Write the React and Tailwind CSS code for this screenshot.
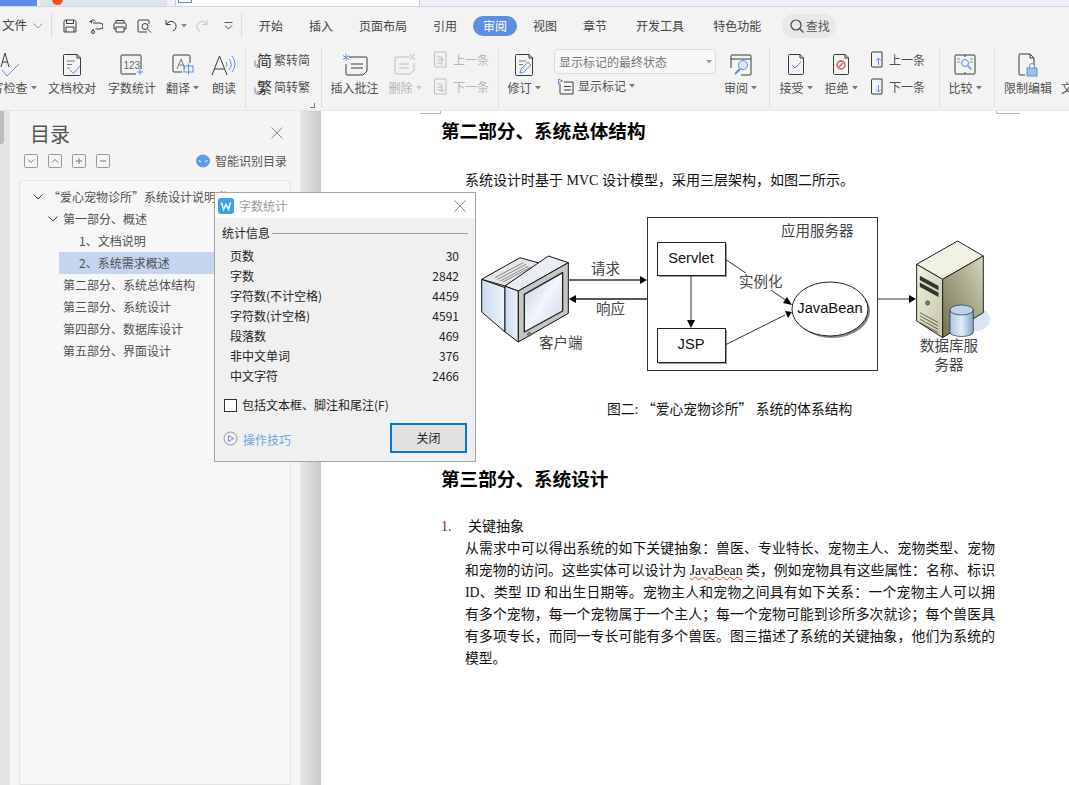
import React from "react";

const K = "#3a3a3a";
const B = "#5b8fe0";
const D = "#bdbdbd";

function Ic({ w = 24, h = 24, children, className = "" }) {
  return (
    <svg width={w} height={h} viewBox={`0 0 ${w} ${h}`} fill="none" stroke={K} strokeWidth="1" className={`shrink-0 ${className}`}>
      {children}
    </svg>
  );
}

const Caret = ({ c = "#777" }) => (
  <svg width="6" height="4" viewBox="0 0 6 4" className="ml-[3px] shrink-0"><path d="M0 0h6L3 3.5z" fill={c} /></svg>
);

function Big({ w, icon, label, caret, disabled, className = "" }) {
  return (
    <div className={`flex flex-col items-center shrink-0 pt-[6px] ${className}`} style={{ width: w }}>
      <div className="h-[29px] flex items-center justify-center">{icon}</div>
      <div className={`h-[18px] flex items-center text-[12px] whitespace-nowrap ${disabled ? "text-[#b5b5b5]" : "text-[#505050]"}`}>
        {label}
        {caret && <Caret c={disabled ? "#c5c5c5" : "#777"} />}
      </div>
    </div>
  );
}

const Sep = () => <div className="w-px h-[60px] mt-[4px] bg-[#e0e0e0] shrink-0" />;

const Doc = ({ w = 18, h = 24, s = K, children }) => (
  <Ic w={w} h={h}>
    <path d={`M1.5 2.5a1 1 0 0 1 1-1H${w - 5}L${w - 1.5} 5V${h - 2.5}a1 1 0 0 1-1 1H2.5a1 1 0 0 1-1-1z`} stroke={s} />
    <path d={`M${w - 5} 1.5V5h3.5`} stroke={s} />
    {children}
  </Ic>
);

const NavRow = ({ up, text, disabled, iconW = 16 }) => {
  const s = disabled ? D : K;
  const a = disabled ? D : B;
  return (
    <div className="flex items-center h-[27px]">
      <Ic w={iconW} h={18}>
        <path d={`M1.5 2a1 1 0 0 1 1-1H${iconW - 3}v15H2.5a1 1 0 0 1-1-1z`} stroke={s} />
        {disabled && <path d="M4 6h5M4 9h5M4 12h5" stroke={s} />}
        {up ? <path d={`M${iconW / 2 + 1} 14V7m-2.5 2.5L${iconW / 2 + 1} 7l2.5 2.5`} stroke={a} /> : <path d={`M${iconW / 2 + 1} 7v7m-2.5-2.5L${iconW / 2 + 1} 14l2.5-2.5`} stroke={a} />}
      </Ic>
      <span className={`ml-[4px] text-[12px] ${disabled ? "text-[#b5b5b5]" : "text-[#505050]"}`}>{text}</span>
    </div>
  );
};

const ConvArrow = () => (
  <svg width="5" height="8" viewBox="0 0 5 8" fill="none" stroke="#5b8fe0" className="shrink-0 self-end mb-[1px]"><path d="M1 .5V6h3M2.800 4.200 4.500 6 2.800 7.800" /></svg>
);

function QuickBar() {
  return (
    <div className="flex items-center h-[37px] shrink-0">
      <span className="ml-[2px] text-[12.5px] text-[#444]">文件</span>
      <svg width="10" height="6" viewBox="0 0 10 6" fill="none" stroke="#999" className="ml-[6px]"><path d="M.5.5 5 5 9.5.5" /></svg>
      <div className="w-px h-[25px] bg-[#dcdcdc] ml-[8px]" />
      <div className="ml-[11px]">
        <Ic w={14} h={14}><path d="M1 2.5A1.5 1.5 0 0 1 2.5 1h9L13 2.5v10a.5.5 0 0 1-.5.5h-11a.5.5 0 0 1-.5-.5zM3.5 1v3.5h7V1M3 13V8h8v5" /></Ic>
      </div>
      <div className="ml-[12px]">
        <Ic w={14} h={16}><path d="M4 5h7a2.500 2.500 0 0 1 0 6H6.500M6 3.500a2 2 0 1 0-3 2M.5 3.500h3M2.500 14a1.500 1.500 0 1 0 3 0 1.500 1.500 0 0 0-3 0zM4 11v1.500" /></Ic>
      </div>
      <div className="ml-[10px]">
        <Ic w={14} h={14}><path d="M3 4V1.500h8V4M3 10H1V5.500A1.500 1.500 0 0 1 2.500 4h9A1.500 1.500 0 0 1 13 5.500V10h-2M3 8h8v5H3z" /></Ic>
      </div>
      <div className="ml-[10px]">
        <Ic w={15} h={14}><path d="M10 13H2a1 1 0 0 1-1-1V2a1 1 0 0 1 1-1h9a1 1 0 0 1 1 1v3" /><circle cx="8" cy="7.500" r="3" /><path d="m10.500 10 3.500 3.500" /></Ic>
      </div>
      <div className="ml-[13px]">
        <Ic w={13} h={13}><path d="M1 1v4.500h4.500M1.500 5.500A5 5 0 1 1 8 12" /></Ic>
      </div>
      <Caret c="#888" />
      <div className="ml-[8px]">
        <Ic w={13} h={13}><path d="M12 1v4.500H7.500M11.500 5.500A5 5 0 1 0 5 12" stroke="#c5c5c5" /></Ic>
      </div>
      <svg width="9" height="8" viewBox="0 0 9 8" fill="none" stroke="#555" className="ml-[16px]"><path d="M.5.500h8M1 3.500 4.500 7 8 3.500" /></svg>
      <div className="w-px h-[25px] bg-[#dcdcdc] ml-[8px]" />
      <div className="flex items-center ml-[17px] text-[12px] text-[#444] whitespace-nowrap">
        <span>开始</span>
        <span className="ml-[26px]">插入</span>
        <span className="ml-[26px]">页面布局</span>
        <span className="ml-[26px]">引用</span>
        <span className="ml-[16px] w-[44px] h-[20px] rounded-full bg-[#5b8fe0] text-white flex items-center justify-center">审阅</span>
        <span className="ml-[16px]">视图</span>
        <span className="ml-[26px]">章节</span>
        <span className="ml-[29px]">开发工具</span>
        <span className="ml-[29px]">特色功能</span>
        <span className="ml-[21px] w-[54px] h-[24px] rounded-full bg-[#e9e9e9] flex items-center justify-center text-[#555]">
          <svg width="16" height="16" viewBox="0 0 16 16" fill="none" stroke="#444" strokeWidth="1.200" className="mr-[1px]"><circle cx="7" cy="7" r="5" /><path d="m10.500 10.500 4 4" /></svg>
          查找
        </span>
      </div>
    </div>
  );
}

function Ribbon() {
  return (
    <div className="flex h-[66px] shrink-0 overflow-hidden">
      <Big
        w={56}
        className="ml-[-20px]"
        label="拼写检查"
        caret
        icon={
          <Ic w={24} h={26}>
            <path d="M5 15 9 1l4 14M6.500 10h5" />
            <path d="m6 18 5 6L23 12" stroke={B} />
          </Ic>
        }
      />
      <Big
        w={60}
        className="ml-[6px]"
        label="文档校对"
        icon={
          <Doc w={20} h={24}>
            <path d="M5 8h8M5 11.500h5M5 15h3" stroke="#777" />
            <path d="m8 17 3.500 3.500L18 13" stroke={B} />
          </Doc>
        }
      />
      <Big
        w={60}
        label="字数统计"
        icon={
          <Ic w={24} h={22}>
            <path d="M21 15V2a1 1 0 0 0-1-1H2a1 1 0 0 0-1 1v17a1 1 0 0 0 1 1h14" />
            <text x="3.500" y="14.500" fontSize="10" fill="#666" stroke="none" fontFamily="Liberation Sans">123</text>
            <path d="M20 15v6M17 18h6" stroke={B} />
          </Ic>
        }
      />
      <Big
        w={41}
        label="翻译"
        caret
        icon={
          <Ic w={22} h={22}>
            <path d="M10 18H2a1 1 0 0 1-1-1V2a1 1 0 0 1 1-1h15a1 1 0 0 1 1 1v7" />
            <path d="m5 15 4-10 4 10M6.500 11h5" stroke="#777" />
            <rect x="12" y="12" width="9" height="6" stroke={B} />
            <path d="M16.500 9.500v11" stroke={B} />
          </Ic>
        }
      />
      <Big
        w={42}
        label="朗读"
        icon={
          <Ic w={26} h={24}>
            <path d="m1 22 7.500-19L16 22M3.500 16h10" />
            <path d="M15 9a4 4 0 0 1 0 5M18 6a8 8 0 0 1 0 11M21 3a12 12 0 0 1 0 16" stroke={B} />
          </Ic>
        }
      />
      <Sep />
      <div className="relative w-[75px] pl-[8px] pt-[2px] shrink-0 text-[12px] text-[#505050]">
        <div className="flex items-center h-[27px]">
          <span className="w-[20px] h-[18px] flex items-center shrink-0 text-[#333]"><ConvArrow /><span className="text-[15px] leading-[18px] ml-[-2px]">简</span></span>
          <span>繁转简</span>
        </div>
        <div className="flex items-center h-[27px]">
          <span className="w-[20px] h-[18px] flex items-center shrink-0 text-[#333]"><ConvArrow /><span className="text-[15px] leading-[18px] ml-[-2px]">繁</span></span>
          <span>简转繁</span>
        </div>
        <div className="absolute right-[6px] bottom-[2px] w-[5px] h-[5px] border-r border-b border-[#777]" />
      </div>
      <Sep />
      <Big
        w={65}
        label="插入批注"
        icon={
          <Ic w={26} h={24}>
            <path d="M7 4h17a1 1 0 0 1 1 1v13l-4 4H5a1 1 0 0 1-1-1v-10" />
            <path d="M9 11h12M9 15h12" />
            <path d="M4 1v7M1 2.500l6 4M7 2.500l-6 4" stroke={B} />
          </Ic>
        }
      />
      <Big
        w={36}
        label="删除"
        caret
        disabled
        icon={
          <Ic w={24} h={24}>
            <path d="M17 4H3a1 1 0 0 0-1 1v15a1 1 0 0 0 1 1h14l4-4V10" stroke={D} />
            <path d="M6 11h10M6 15h10M17 1l5 6M22 1l-5 6" stroke={D} />
          </Ic>
        }
      />
      <div className="w-[75px] pl-[10px] pt-[2px] shrink-0">
        <NavRow up text="上一条" disabled />
        <NavRow text="下一条" disabled />
      </div>
      <Sep />
      <Big
        w={50}
        label="修订"
        caret
        icon={
          <Doc w={20} h={24}>
            <path d="M5 8h7M5 11.500h4" stroke="#777" />
            <path d="m6 20 1-4 7-7 3 3-7 7z" stroke={B} />
          </Doc>
        }
      />
      <div className="w-[171px] pl-[3px] pt-[5px] shrink-0">
        <div className="ml-[2px] w-[162px] h-[25px] rounded-[4px] border border-[#dcdcdc] bg-[#f7f7f7] flex items-center pl-[4px] pr-[3px] text-[12px] text-[#777]">
          <span className="flex-1">显示标记的最终状态</span>
          <Caret c="#999" />
        </div>
        <div className="flex items-center h-[18px] mt-[3px] pl-[3px] text-[12px] text-[#505050]">
          <Ic w={17} h={17} className="ml-[2px]">
            <path d="M3 6v9a1 1 0 0 0 1 1h12V4H7" />
            <path d="M1.500 7V1l4 2-4 2" stroke={B} />
            <path d="M7 8.500h7M7 12h7" />
          </Ic>
          <span className="ml-[4px]">显示标记</span>
          <Caret />
        </div>
      </div>
      <Big
        w={41}
        label="审阅"
        caret
        icon={
          <Ic w={22} h={22}>
            <path d="M1 5V2a1 1 0 0 1 1-1h18a1 1 0 0 1 1 1v18a1 1 0 0 1-1 1h-9M1 5h20M1 5v9" />
            <circle cx="13" cy="11" r="4.500" stroke={B} fill="#dce8f8" />
            <path d="m10 15-5 5" stroke={B} strokeWidth="2" />
          </Ic>
        }
      />
      <div className="w-[8px] shrink-0" />
      <Sep />
      <Big
        w={52}
        label="接受"
        caret
        icon={
          <Doc w={18} h={23}>
            <path d="m5 12 3 3 6-6" stroke={B} />
          </Doc>
        }
      />
      <Big
        w={38}
        label="拒绝"
        caret
        icon={
          <Doc w={18} h={23}>
            <circle cx="9" cy="12" r="4" stroke="#d9534f" strokeWidth="1.300" />
            <path d="m6.500 14.500 5-5" stroke="#d9534f" strokeWidth="1.300" />
          </Doc>
        }
      />
      <div className="w-[79px] pl-[10px] pt-[2px] shrink-0">
        <NavRow up text="上一条" iconW={15} />
        <NavRow text="下一条" iconW={15} />
      </div>
      <Sep />
      <Big
        w={50}
        label="比较"
        caret
        icon={
          <Ic w={22} h={21}>
            <path d="M11 1H2a1 1 0 0 0-1 1v17a1 1 0 0 0 1 1h18a1 1 0 0 0 1-1V2a1 1 0 0 0-1-1z" />
            <path d="M11 1v2M11 18v2" />
            <circle cx="11" cy="9" r="3.500" stroke={B} />
            <path d="m13.500 11.500 4 4" stroke={B} strokeWidth="1.500" />
            <path d="M3 5h3M3 8h3M16 5h3M16 8h3" stroke="#888" />
          </Ic>
        }
      />
      <div className="w-[4px] shrink-0" />
      <Sep />
      <Big
        w={66}
        label="限制编辑"
        icon={
          <Ic w={20} h={24}>
            <path d="M7 22H2a1 1 0 0 1-1-1V2a1 1 0 0 1 1-1h10l4 4v7" />
            <path d="M12 1v4h4" />
            <rect x="9" y="15" width="10" height="8" fill="#9fc0ee" stroke={B} />
            <path d="M11.500 15v-2a2.500 2.500 0 0 1 5 0v2" stroke={B} />
          </Ic>
        }
      />
      <span className="text-[12px] text-[#505050] h-[18px] mt-[35px] flex items-center">文</span>
    </div>
  );
}

const SmallBtn = ({ d }) => (
  <svg width="14" height="14" viewBox="0 0 14 14" fill="none" className="shrink-0">
    <rect x=".5" y=".5" width="13" height="13" rx="1" stroke="#999" />
    <path d={d} stroke="#777" />
  </svg>
);

const Chev = ({ className }) => (
  <svg width="10" height="6" viewBox="0 0 10 6" fill="none" stroke="#444" className={className}><path d="M.5.500 5 5 9.500.500" /></svg>
);

function TocRow({ pad, chevPad, children, active }) {
  return (
    <div className={`h-[22px] flex items-center text-[12px] text-[#505050] whitespace-nowrap ${active ? "bg-[#c5d5ef]" : ""}`} style={{ paddingLeft: pad, marginLeft: active ? 39 : 0 }}>
      {chevPad !== undefined && <Chev className="mr-[5px]" />}
      {children}
    </div>
  );
}

function Toc() {
  return (
    <div className="w-[290px] bg-[#f5f5f5] flex flex-col shrink-0">
      <div className="flex items-center h-[43px] pl-[20px] pr-[17px]">
        <span className="text-[20px] text-[#555] flex-1 mt-[2px]">目录</span>
        <svg width="12" height="12" viewBox="0 0 12 12" stroke="#888" fill="none"><path d="m.5.500 11 11M11.500.500l-11 11" /></svg>
      </div>
      <div className="flex items-center h-[14px] pl-[14px] pr-[13px]">
        <div className="flex gap-[10px]">
          <SmallBtn d="m4 5.500 3 3 3-3" />
          <SmallBtn d="m4 8.500 3-3 3 3" />
          <SmallBtn d="M4 7h6M7 4v6" />
          <SmallBtn d="M4 7h6" />
        </div>
        <div className="flex-1" />
        <svg width="14" height="14" viewBox="0 0 14 14" className="mr-[5px]"><ellipse cx="7" cy="7" rx="7" ry="6.500" fill="#5b9de8" /><path d="M2.500 6.500 5 8M11.500 6.500 9 8" stroke="#fff" /></svg>
        <span className="text-[12px] text-[#555] whitespace-nowrap">智能识别目录</span>
      </div>
      <div className="flex-1 ml-[9px] mr-[9px] mt-[12px] rounded-t-[4px] border border-[#e4e4e4] bg-[#f7f7f7] pt-[5px] overflow-hidden">
        <TocRow pad={13} chevPad={0}>“爱心宠物诊所”系统设计说明书</TocRow>
        <TocRow pad={28} chevPad={0}>第一部分、概述</TocRow>
        <TocRow pad={59}>1、文档说明</TocRow>
        <TocRow pad={20} active>2、系统需求概述</TocRow>
        <TocRow pad={43}>第二部分、系统总体结构</TocRow>
        <TocRow pad={43}>第三部分、系统设计</TocRow>
        <TocRow pad={43}>第四部分、数据库设计</TocRow>
        <TocRow pad={43}>第五部分、界面设计</TocRow>
      </div>
    </div>
  );
}

function Diagram() {
  const serif = { fontFamily: "'Noto Sans CJK SC', sans-serif", fontSize: 14.5, fill: "#444" };
  const sans = { fontFamily: "'Liberation Sans', sans-serif", fontSize: 14.7, fill: "#111" };
  return (
    <svg width="535" height="170" viewBox="470 210 535 170" className="block">
      <defs>
        <linearGradient id="sc" x1="0" y1="0" x2="1" y2="1"><stop offset="0" stopColor="#b9c9e2" /><stop offset=".5" stopColor="#f4f7fb" /><stop offset="1" stopColor="#c3d0e6" /></linearGradient>
        <linearGradient id="si" x1="0" y1="0" x2="1" y2="0"><stop offset="0" stopColor="#c9d9ef" /><stop offset="1" stopColor="#eef3fa" /></linearGradient>
        <linearGradient id="cy" x1="0" y1="0" x2="1" y2="0"><stop offset="0" stopColor="#a9c5e4" /><stop offset=".5" stopColor="#e4eef8" /><stop offset="1" stopColor="#7fa5cf" /></linearGradient>
        <linearGradient id="fr" x1="0" y1="0" x2="1" y2="1"><stop offset="0" stopColor="#f1f1e2" /><stop offset="1" stopColor="#c4c5a6" /></linearGradient>
        <linearGradient id="sd" x1="0" y1="1" x2="1" y2="0"><stop offset="0" stopColor="#6f7150" /><stop offset="1" stopColor="#d5d6bb" /></linearGradient>
      </defs>

      <g transform="translate(470 205) scale(.3333)" stroke="#111" strokeWidth="3" strokeLinejoin="round">
        <path d="M35 220 105 245V378L35 318Z" fill="url(#si)" />
        <path d="M35 220 150 155 210 172 105 240Z" fill="#e6e6e6" />
        <path d="M75 215 160 170M83 220 168 175M91 225 176 180M99 228 184 183" stroke="#555" strokeWidth="2" />
        <path d="M105 240 145 255V408L105 378Z" fill="url(#si)" />
        <path d="M105 240 235 150 295 170 145 255Z" fill="#e9edf2" />
        <path d="M145 255 295 170V322L145 408Z" fill="#c6c6c6" />
        <path d="M163 265 278 200V315L163 378Z" fill="url(#sc)" stroke="#222" strokeWidth="4" />
        <circle cx="178" cy="385" r="5" fill="#7bb77b" strokeWidth="2" />
      </g>

      <g fill="#000" stroke="none">
        <rect x="568" y="278" width="73" height="2" fill="#666" />
        <path d="M647 279 640 275V283Z" />
        <rect x="575" y="297" width="72" height="2" fill="#555" />
        <path d="M569 298 576 294V302Z" />
      </g>
      <text x="591" y="273" style={serif}>请求</text>
      <text x="596" y="313" style={serif}>响应</text>
      <text x="539" y="347" style={serif}>客户端</text>

      <rect x="647.500" y="216.500" width="230" height="153" fill="#fff" stroke="#333" />
      <text x="781" y="235" style={serif}>应用服务器</text>

      <rect x="659" y="243" width="68" height="33" fill="#999" />
      <rect x="657.500" y="241.500" width="68" height="33" fill="#fff" stroke="#222" />
      <text x="691" y="262" textAnchor="middle" style={sans}>Servlet</text>
      <rect x="659" y="329" width="68" height="34" fill="#999" />
      <rect x="657.500" y="327.500" width="68" height="34" fill="#fff" stroke="#222" />
      <text x="691" y="348" textAnchor="middle" style={sans}>JSP</text>

      <path d="M691 275V320" stroke="#333" />
      <path d="M691 327 687 319H695Z" fill="#000" />
      <path d="M725 258 787 300M725 344 785 314" stroke="#333" />
      <path d="M792 304 783 302 787 296Z M792 311 785 310 788 317Z" fill="#000" />
      <rect x="739" y="272" width="44" height="17" fill="#fff" />
      <text x="739" y="286" style={serif}>实例化</text>

      <ellipse cx="832" cy="310" rx="38" ry="27" fill="#888" />
      <ellipse cx="830" cy="308" rx="38" ry="27" fill="#fff" stroke="#222" />
      <text x="830" y="312" textAnchor="middle" style={sans}>JavaBean</text>

      <path d="M878 298H910" stroke="#333" />
      <path d="M916 298 909 294V302Z" fill="#000" />

      <g transform="translate(760 205) scale(.3333)" stroke="#222" strokeWidth="3" strokeLinejoin="round">
        <ellipse cx="650" cy="340" rx="40" ry="35" fill="#dbe4f2" stroke="none" />
        <path d="M470 175 593 105 670 150 548 220Z" fill="#f2f2e4" />
        <path d="M470 175 548 220V395L470 345Z" fill="url(#fr)" />
        <path d="M548 220 670 150V320L548 395Z" fill="url(#sd)" />
        <path d="M480 210 535 240V252L480 222Z" fill="#333" strokeWidth="1" />
        <path d="M480 230 535 260V272L480 242Z" fill="#333" strokeWidth="1" />
        <circle cx="503" cy="291" r="6" fill="#4f9b7d" strokeWidth="2" />
        <path d="M480 320 535 350M480 330 535 360M480 340 535 370M480 350 535 380" strokeWidth="2" fill="none" />
        <path d="M570 312V378C570 396 640 396 640 378V312Z" fill="url(#cy)" strokeWidth="2" />
        <ellipse cx="605" cy="312" rx="35" ry="15" fill="#bcd3ec" strokeWidth="2" />
      </g>
      <text x="949" y="350" textAnchor="middle" style={serif}>数据库服</text>
      <text x="949" y="369" textAnchor="middle" style={serif}>务器</text>
    </svg>
  );
}

const Q = ({ children }) => <span className="font-['Noto_Sans_CJK_SC',sans-serif]">{children}</span>;

const para = [
  "从需求中可以得出系统的如下关键抽象：兽医、专业特长、宠物主人、宠物类型、宠物",
  <>和宠物的访问。这些实体可以设计为 <span className="underline decoration-wavy decoration-red-500 decoration-1">JavaBean</span> 类，例如宠物具有这些属性：名称、标识</>,
  "ID、类型 ID 和出生日期等。宠物主人和宠物之间具有如下关系：一个宠物主人可以拥",
  "有多个宠物，每一个宠物属于一个主人；每一个宠物可能到诊所多次就诊；每个兽医具",
  "有多项专长，而同一专长可能有多个兽医。图三描述了系统的关键抽象，他们为系统的",
];

function Page() {
  return (
    <div className="flex-1 bg-white pl-[120px] font-['Liberation_Serif','Noto_Sans_CJK_SC',serif] text-[14px] leading-[22px] text-[#111] overflow-hidden relative">
      <h2 className="mt-[9px] h-[24px] leading-[24px] text-[18.6px] font-bold text-black">第二部分、系统总体结构</h2>
      <p className="mt-[26px] ml-[24px]">系统设计时基于 MVC 设计模型，采用三层架构，如图二所示。</p>
      <div className="mt-[19px] ml-[29px]"><Diagram /></div>
      <p className="mt-[16px] h-[22px] ml-[166px] whitespace-nowrap text-[13.8px]">图二: <Q>“</Q>爱心宠物诊所<Q>”</Q> 系统的体系结构</p>
      <h2 className="mt-[49px] h-[24px] leading-[24px] text-[18.6px] font-bold text-black">第三部分、系统设计</h2>
      <div className="mt-[24px] flex">
        <span className="w-[27px] text-[#7a1f1f]">1.</span>
        <span>关键抽象</span>
      </div>
      <div className="ml-[24px] w-[530px] text-[13.8px]">
        {para.map((l, i) => (
          <div key={i} className="[text-align-last:justify]">{l}</div>
        ))}
        <div>模型。</div>
      </div>
      <div className="absolute left-[99px] top-[0px] w-[21px] h-[3px] border-b border-[#bbb] border-r" />
      <div className="absolute left-[675px] top-[0px] w-[24px] h-[3px] border-b border-[#bbb] border-l" />
    </div>
  );
}

function Dialog() {
  const rows = [
    ["页数", "30"],
    ["字数", "2842"],
    ["字符数(不计空格)", "4459"],
    ["字符数(计空格)", "4591"],
    ["段落数", "469"],
    ["非中文单词", "376"],
    ["中文字符", "2466"],
  ];
  return (
    <div className="absolute left-[214px] top-[192px] w-[262px] h-[270px] border border-[#a5a5a5] bg-[#f0f0f0] text-[12px] text-[#222]">
      <div className="h-[25px] bg-white flex items-center pl-[3px] pr-[9px]">
        <svg width="16" height="16" viewBox="0 0 16 16"><rect width="16" height="16" rx="3" fill="#3aa0f5" /><path d="M3.500 4.500 5.500 11.500 8 6.500 10.500 11.500 12.500 4.500" stroke="#fff" strokeWidth="1.500" fill="none" /></svg>
        <span className="ml-[5px] flex-1 text-[#999]">字数统计</span>
        <svg width="12" height="12" viewBox="0 0 12 12" stroke="#888" fill="none"><path d="m.5.500 11 11M11.500.500l-11 11" /></svg>
      </div>
      <div className="flex items-center h-[16px] mt-[7px] pl-[7px] pr-[7px]">
        <span>统计信息</span>
        <div className="flex-1 h-px bg-[#a0a0a0] ml-[2px]" />
      </div>
      <div className="mt-[5px] pl-[15px] pr-[16px]">
        {rows.map(([a, b]) => (
          <div key={a} className="h-[20px] flex items-center justify-between"><span>{a}</span><span>{b}</span></div>
        ))}
      </div>
      <div className="flex items-center mt-[10px] pl-[9px]">
        <div className="w-[13px] h-[13px] border border-[#333] bg-white" />
        <span className="ml-[5px]">包括文本框、脚注和尾注(F)</span>
      </div>
      <div className="flex items-center mt-[9px] pl-[8px] pr-[8px]">
        <svg width="15" height="15" viewBox="0 0 15 15" fill="none"><circle cx="7.500" cy="7.500" r="6.500" stroke="#999" /><path d="M5.500 4.500v6l5-3z" stroke="#5b8fe0" /></svg>
        <span className="ml-[5px] flex-1 text-[#6ea3e8] mt-[4px]">操作技巧</span>
        <div className="w-[77px] h-[30px] border-2 border-[#0078d7] bg-[#e1e1e1] flex items-center justify-center">关闭</div>
      </div>
    </div>
  );
}

export default function App() {
  return (
    <div className="relative w-[1069px] h-[785px] overflow-hidden flex flex-col bg-[#f3f3f3] font-['Noto_Sans_CJK_SC',sans-serif]">
      <div className="h-[7px] flex shrink-0 bg-[#eef0f5] border-b border-[#d0d4e0]">
        <div className="w-[37px] bg-[#5b8def]" />
        <div className="w-[127px] ml-[3px] bg-[#dfe3ec] relative overflow-hidden">
          <div className="absolute left-[12px] top-[-6px] w-[11px] h-[11px] rounded-full bg-[#f4511e]" />
        </div>
        <div className="w-[245px] ml-[8px] bg-white border-x border-[#c8ccd8] relative">
          <div className="absolute left-[2px] top-[-1px] w-[14px] h-[4px] border-x border-b border-[#5b8fe0]" />
        </div>
      </div>
      <QuickBar />
      <Ribbon />
      <div className="flex-1 flex min-h-0 border-t border-[#e6e6e6]">
        <div className="w-[10px] bg-[#e4e4e4] shrink-0">
          <div className="w-[4px] h-[33px] bg-[#bbbbbb] rounded-br-[3px]" />
        </div>
        <Toc />
        <div className="w-[21px] shrink-0 bg-gradient-to-r from-[#e8e8e8] to-[#c8c8c8]" />
        <Page />
      </div>
      <Dialog />
    </div>
  );
}
